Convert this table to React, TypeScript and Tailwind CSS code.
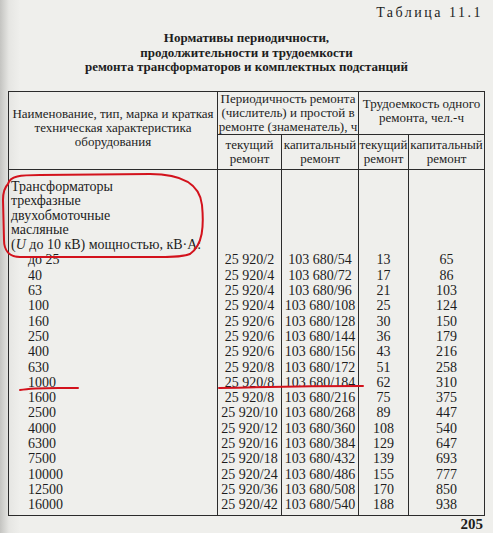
const rows: [string, string, string, string, string][] = [
  ['до 25', '25 920/2', '103 680/54', '13', '65'],
  ['40', '25 920/4', '103 680/72', '17', '86'],
  ['63', '25 920/4', '103 680/96', '21', '103'],
  ['100', '25 920/4', '103 680/108', '25', '124'],
  ['160', '25 920/6', '103 680/128', '30', '150'],
  ['250', '25 920/6', '103 680/144', '36', '179'],
  ['400', '25 920/6', '103 680/156', '43', '216'],
  ['630', '25 920/8', '103 680/172', '51', '258'],
  ['1000', '25 920/8', '103 680/184', '62', '310'],
  ['1600', '25 920/8', '103 680/216', '75', '375'],
  ['2500', '25 920/10', '103 680/268', '89', '447'],
  ['4000', '25 920/12', '103 680/360', '108', '540'],
  ['6300', '25 920/16', '103 680/384', '129', '647'],
  ['7500', '25 920/18', '103 680/432', '139', '693'],
  ['10000', '25 920/24', '103 680/486', '155', '777'],
  ['12500', '25 920/36', '103 680/508', '170', '850'],
  ['16000', '25 920/42', '103 680/540', '188', '938'],
];

const line = 'border-x border-[#2b2b2b] p-0';
const head = 'border border-[#2b2b2b] p-0 align-middle font-normal whitespace-nowrap';

export default function App() {
  return (
    <div className="relative h-[533px] w-[493px] overflow-hidden bg-[linear-gradient(to_right,#c4c4c1,#e6e6e3_9px,#efefec_20px)] font-['Liberation_Serif',serif] text-[#1d1d1d]">
      <div className="pt-[5px] pr-[10px] text-right text-[14px] leading-[16px] tracking-[2.5px]">
        Таблица 11.1
      </div>

      <div className="mt-[10px] text-center text-[13px] leading-[14.5px] font-bold">
        Нормативы периодичности,
        <br />
        продолжительности и трудоемкости
        <br />
        ремонта трансформаторов и комплектных подстанций
      </div>

      <table className="mt-[16px] ml-[8px] w-[476px] table-fixed border-collapse border border-[#2b2b2b] font-['Liberation_Serif',serif] text-[#1d1d1d]">
        <colgroup>
          <col className="w-[209px]" />
          <col className="w-[64px]" />
          <col className="w-[77px]" />
          <col className="w-[50px]" />
          <col className="w-[76px]" />
        </colgroup>
        <thead className="text-[13px] leading-[14px]">
          <tr className="h-[43px]">
            <th rowSpan={2} className={`${head} pb-[4px]`}>
              Наименование, тип, марка и краткая
              <br />
              техническая характеристика
              <br />
              оборудования
            </th>
            <th colSpan={2} className={head}>
              Периодичность ремонта
              <br />
              (числитель) и простой в
              <br />
              ремонте (знаменатель), ч
            </th>
            <th colSpan={2} className={`${head} pb-[3px]`}>
              Трудоемкость одного
              <br />
              ремонта, чел.-ч
            </th>
          </tr>
          <tr className="h-[35px]">
            {['текущий', 'капитальный', 'текущий', 'капитальный'].map((t, i) => (
              <th key={i} className={head}>
                {t}
                <br />
                ремонт
              </th>
            ))}
          </tr>
        </thead>
        <tbody className="text-[14px]">
          <tr>
            <td className={`${line} pt-[10px] pl-[2px] align-top leading-[14.6px]`}>
              Трансформаторы
              <br />
              трехфазные
              <br />
              двухобмоточные
              <br />
              масляные
              <br />
              (<i>U</i> до 10 кВ) мощностью, кВ·А:
            </td>
            <td className={line} />
            <td className={line} />
            <td className={line} />
            <td className={line} />
          </tr>
          {rows.map((r, i) => {
            const pb = i === rows.length - 1 ? 'pb-[2px]' : '';
            return (
              <tr key={r[0]} className="h-[15.3px] leading-[15.3px]">
                <td className={`${line} ${pb} pl-[19px] align-top`}>{r[0]}</td>
                <td className={`${line} ${pb} text-center whitespace-nowrap align-top`}>{r[1]}</td>
                <td className={`${line} ${pb} text-center whitespace-nowrap align-top`}>{r[2]}</td>
                <td className={`${line} ${pb} text-center align-top`}>{r[3]}</td>
                <td className={`${line} ${pb} text-center align-top`}>{r[4]}</td>
              </tr>
            );
          })}
        </tbody>
      </table>

      <div className="mt-[1px] pr-[10px] text-right text-[15px] leading-[15px] font-bold">205</div>

      <svg className="pointer-events-none absolute inset-0" width="493" height="533" fill="none" stroke="#d3121c" strokeWidth="2" strokeLinecap="round">
        <path d="M8 184 C10 176 20 175 40 175 L150 174 C185 174 200 186 202 205 C204 226 203 245 190 254 C180 258 160 257 140 257 L20 257 C9 257 4 250 4 240 L3 200 C3 192 5 187 8 184 Z" />
        <path d="M20 390 C36 387 60 388 78 388" />
        <path d="M219 388 C260 387 320 386 363 386" />
      </svg>
    </div>
  );
}
